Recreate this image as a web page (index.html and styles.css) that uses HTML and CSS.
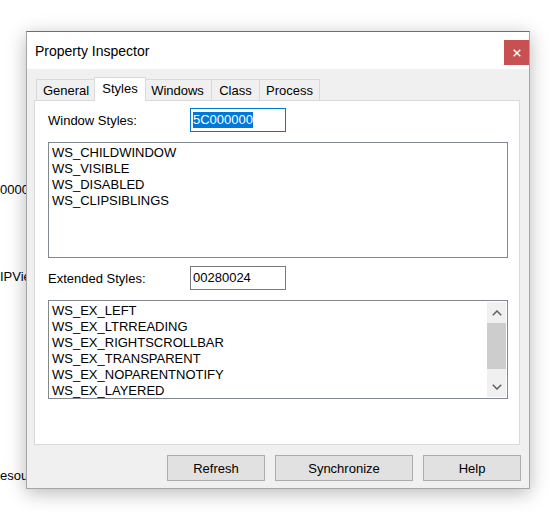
FILE: index.html
```html
<!DOCTYPE html>
<html>
<head>
<meta charset="utf-8">
<link rel="stylesheet" href="styles.css">
</head>
<body>
<div class="desk">
  <span class="frag f1">00000</span>
  <span class="frag f2">IPVie</span>
  <span class="frag f3">esou</span>
  <div class="win">
    <div class="titlebar">
      <span class="title">Property Inspector</span>
      <div class="close"><svg width="8" height="8" viewBox="0 0 8 8"><path d="M0.7 0.7L7.3 7.3M7.3 0.7L0.7 7.3" stroke="#fff" stroke-width="1.5" fill="none"/></svg></div>
    </div>
    <div class="body">
      <div class="tabs">
        <div class="tab t-general">General</div>
        <div class="tab t-styles active">Styles</div>
        <div class="tab t-windows">Windows</div>
        <div class="tab t-class">Class</div>
        <div class="tab t-process">Process</div>
      </div>
      <div class="panel">
        <div class="row">
          <span class="label">Window Styles:</span>
          <div class="edit focus"><span class="sel">5C000000</span></div>
        </div>
        <div class="list l1">
          <div class="items">
            <div>WS_CHILDWINDOW</div>
            <div>WS_VISIBLE</div>
            <div>WS_DISABLED</div>
            <div>WS_CLIPSIBLINGS</div>
          </div>
        </div>
        <div class="row r2">
          <span class="label">Extended Styles:</span>
          <div class="edit">00280024</div>
        </div>
        <div class="list l2">
          <div class="items">
            <div>WS_EX_LEFT</div>
            <div>WS_EX_LTRREADING</div>
            <div>WS_EX_RIGHTSCROLLBAR</div>
            <div>WS_EX_TRANSPARENT</div>
            <div>WS_EX_NOPARENTNOTIFY</div>
            <div>WS_EX_LAYERED</div>
          </div>
          <div class="sbar">
            <div class="arrow"><svg width="10" height="6" viewBox="0 0 10 6"><polyline points="0.8,5.2 5,1 9.2,5.2" stroke="#606060" stroke-width="1.5" fill="none"/></svg></div>
            <div class="thumb"></div>
            <div class="track"></div>
            <div class="arrow"><svg width="10" height="6" viewBox="0 0 10 6"><polyline points="0.8,0.8 5,5 9.2,0.8" stroke="#606060" stroke-width="1.5" fill="none"/></svg></div>
          </div>
        </div>
      </div>
      <div class="buttons">
        <div class="btn b-refresh">Refresh</div>
        <div class="btn b-sync">Synchronize</div>
        <div class="btn b-help">Help</div>
      </div>
    </div>
  </div>
</div>
</body>
</html>
```

FILE: styles.css
```css
* { box-sizing: border-box; }
html, body { margin: 0; padding: 0; }
body {
  width: 560px;
  height: 512px;
  background: #fff;
  font-family: "Liberation Sans", Arial, sans-serif;
  font-size: 13px;
  color: #000;
  overflow: hidden;
}
.desk {
  position: relative;
  width: 560px;
  height: 512px;
  overflow: hidden;
}
.frag {
  position: absolute;
  line-height: 16px;
  white-space: nowrap;
}
.f1 { left: 0; top: 182px; }
.f2 { left: 0; top: 269px; }
.f3 { left: 0; top: 468px; }

.win {
  position: absolute;
  left: 26px;
  top: 31px;
  width: 504px;
  height: 458px;
  border: 1px solid #a6a6a6;
  border-top-color: #6e6e6e;
  background: #f0f0f0;
  box-shadow: 0 4px 18px rgba(0,0,0,0.28);
  display: flex;
  flex-direction: column;
}
.titlebar {
  height: 37px;
  background: #fff;
  display: flex;
  align-items: flex-start;
}
.title {
  font-size: 14px;
  line-height: 16px;
  margin: 11px 0 0 8px;
}
.close {
  margin: 8px 0 0 auto;
  width: 25px;
  height: 25px;
  background: #c75050;
  display: flex;
  align-items: center;
  justify-content: center;
}
.close svg { display: block; }

.body {
  flex: 1;
  padding: 8px 8px 7px 7px;
  display: flex;
  flex-direction: column;
}
.tabs {
  height: 23px;
  display: flex;
  align-items: flex-end;
  margin-left: 2px;
  position: relative;
  z-index: 2;
}
.tab {
  height: 21px;
  border: 1px solid #d9d9d9;
  border-bottom: none;
  background: #f0f0f0;
  text-align: center;
  line-height: 21px;
  white-space: nowrap;
}
.tab + .tab { margin-left: -1px; }
.t-general { width: 60px; }
.t-windows { width: 69px; }
.t-class { width: 49px; }
.t-process { width: 61px; }
.tab.active {
  width: 52px;
  height: 24px;
  margin: 0 -2px -1px -2px;
  background: #fff;
  position: relative;
  z-index: 3;
}
.panel {
  width: 486px;
  height: 345px;
  border: 1px solid #d9d9d9;
  background: #fff;
  padding: 7px 0 0 13px;
  position: relative;
  z-index: 1;
}
.row {
  display: flex;
  align-items: center;
  height: 24px;
}
.r2 { margin-top: 8px; }
.label {
  width: 142px;
  line-height: 16px;
  padding-top: 1px;
}
.edit {
  width: 96px;
  height: 24px;
  border: 1px solid #7a7a7a;
  background: #fff;
  padding: 3px 2px;
  line-height: 16px;
}
.edit.focus { border-color: #0078d7; }
.sel {
  background: #0078d7;
  color: #fff;
  display: inline-block;
  height: 16px;
}
.list {
  margin-top: 10px;
  width: 460px;
  border: 1px solid #828790;
  background: #fff;
  display: flex;
}
.l1 { height: 116px; }
.l2 { height: 99px; }
.items {
  flex: 1;
  padding: 2px 3px 0 3px;
  line-height: 16px;
  white-space: nowrap;
}
.sbar {
  width: 19px;
  margin: 1px 1px 1px 0;
  background: #f0f0f0;
  display: flex;
  flex-direction: column;
}
.arrow {
  height: 21px;
  display: flex;
  align-items: center;
  justify-content: center;
}
.arrow svg { display: block; }
.thumb {
  height: 46px;
  background: #cdcdcd;
}
.track { flex: 1; }

.buttons {
  margin-top: 10px;
  display: flex;
  justify-content: flex-end;
  gap: 10px;
}
.btn {
  height: 26px;
  border: 1px solid #adadad;
  background: #e1e1e1;
  text-align: center;
  line-height: 25px;
}
.b-refresh { width: 98px; }
.b-sync { width: 138px; }
.b-help { width: 98px; }
```
